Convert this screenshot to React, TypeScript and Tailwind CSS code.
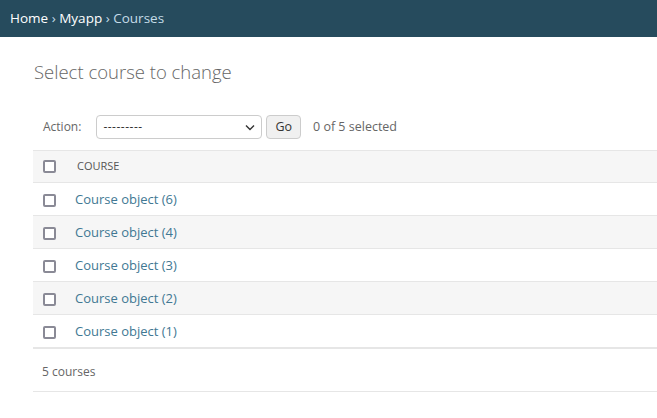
import React from 'react';

const rows = ['Course object (6)', 'Course object (4)', 'Course object (3)', 'Course object (2)', 'Course object (1)'];

const Box = () => (
  <span className="block w-[13px] h-[13px] rounded-[2px] border-2 border-[#8a8a96] bg-white" />
);

const App: React.FC = () => {
  return (
    <div className="min-h-[418px] bg-white text-[#333] font-['Open_Sans',sans-serif]">
      <div className="h-[37px] bg-[#264b5d] px-[10px] flex items-center text-[13.5px]">
        <a className="text-white">Home</a>
        <span className="text-[#c4dce8] mx-[3.5px]">›</span>
        <a className="text-white">Myapp</a>
        <span className="text-[#c4dce8] mx-[3.5px]">›</span>
        <span className="text-[#c4dce8]">Courses</span>
      </div>

      <div className="pl-[33px]">
        <h1 className="pt-[21px] text-[18.5px] font-light text-[#666] leading-[28px] pl-[1px]">
          Select course to change
        </h1>

        <div className="mt-[28px] flex items-center h-[26px] pl-[10px] text-[12px] text-[#666]">
          <span className="mr-[14px]">Action:</span>
          <div className="relative w-[166px] h-[24px] ml-[1px] border border-[#ccc] rounded-[4px] bg-white flex items-center px-[6px] text-[#333]">
            <span className="tracking-[0.5px]">---------</span>
            <svg className="absolute right-[6px] top-[8px]" width="10" height="7" viewBox="0 0 10 7">
              <path d="M1 1.5 L5 5.5 L9 1.5" fill="none" stroke="#333" strokeWidth="1.4" />
            </svg>
          </div>
          <button className="ml-[4px] h-[24px] px-[8px] border border-[#ccc] rounded-[4px] bg-[#f0f0f0] text-[#333] text-[12.5px]">
            Go
          </button>
          <span className="ml-[12px] text-[12.5px]">0 of 5 selected</span>
        </div>

        <div className="mt-[10px] text-[12px]">
          <div className="h-[33px] flex items-center bg-[#f6f6f6] border-y border-[#e6e6e6]">
            <div className="w-[44px] pl-[10px]"><Box /></div>
            <span className="text-[11px] text-[#555] uppercase">Course</span>
          </div>
          {rows.map((r, i) => (
            <div
              key={r}
              className={`h-[33px] pt-[2px] flex items-center border-b border-[#e6e6e6] ${i % 2 === 1 ? 'bg-[#f6f6f6]' : 'bg-white'}`}
            >
              <div className="w-[42px] pl-[10px]"><Box /></div>
              <a className="text-[#417893] text-[13px]">{r}</a>
            </div>
          ))}
          <div className="h-[44px] pt-[3px] flex items-center pl-[9px] border-t border-b border-[#e6e6e6] text-[#666] text-[12px]">
            5 courses
          </div>
        </div>
      </div>
    </div>
  );
};

export default App;
